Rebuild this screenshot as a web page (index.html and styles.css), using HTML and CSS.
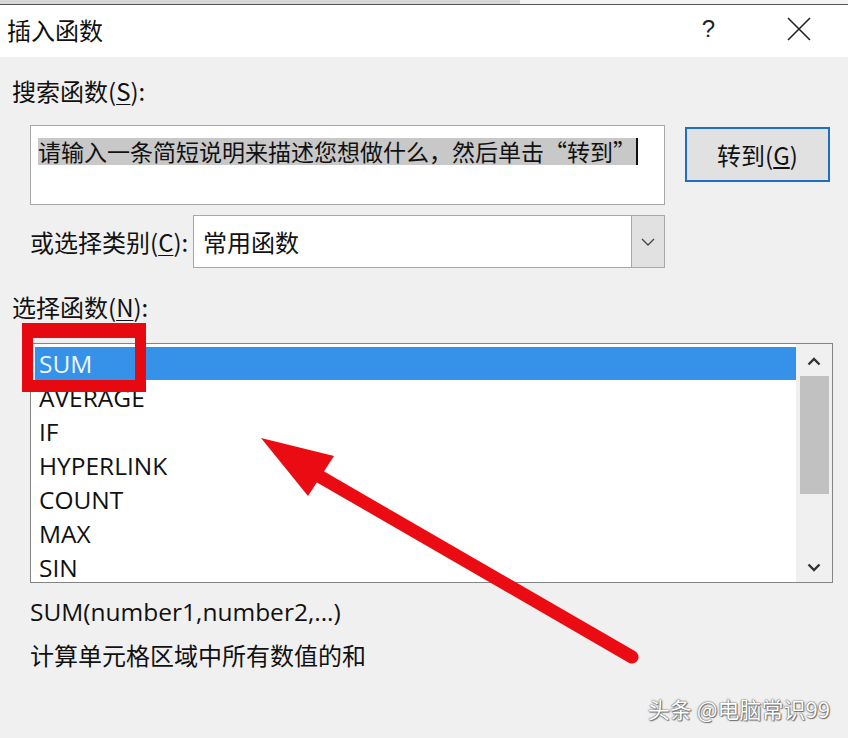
FILE: index.html
```html
<!DOCTYPE html>
<html lang="zh-CN">
<head>
<meta charset="utf-8">
<title>插入函数</title>
<link rel="stylesheet" href="styles.css">
</head>
<body>
<div class="dialog">
  <div class="topstrip"><div class="topstrip-left"></div></div>
  <div class="titlebar">
    <span class="title">插入函数</span>
    <span class="help">?</span>
    <svg class="close" width="24" height="24" viewBox="0 0 24 24"><path d="M1 1 L23 23 M23 1 L1 23" stroke="#222" stroke-width="1.6" fill="none"/></svg>
  </div>
  <div class="content">
    <div class="label lbl-search">搜索函数(<u>S</u>):</div>
    <div class="search-row">
      <div class="textbox"><span class="sel">请输入一条简短说明来描述您想做什么，然后单击“转到”</span><span class="caret"></span></div>
      <div class="btn">转到(<u>G</u>)</div>
    </div>
    <div class="cat-row">
      <span class="label">或选择类别(<u>C</u>):</span>
      <div class="select">
        <span class="select-val">常用函数</span>
        <span class="select-btn"><svg width="14" height="8" viewBox="0 0 14 8"><path d="M1 1 L7 7 L13 1" stroke="#444" stroke-width="1.3" fill="none"/></svg></span>
      </div>
    </div>
    <div class="label lbl-func">选择函数(<u>N</u>):</div>
    <div class="listbox">
      <ul class="items">
        <li class="item selected">SUM</li>
        <li class="item">AVERAGE</li>
        <li class="item">IF</li>
        <li class="item">HYPERLINK</li>
        <li class="item">COUNT</li>
        <li class="item">MAX</li>
        <li class="item">SIN</li>
      </ul>
      <div class="scroll">
        <svg class="sarrow" width="14" height="9" viewBox="0 0 14 9"><path d="M1.5 7.5 L7 2 L12.5 7.5" stroke="#333" stroke-width="2.4" fill="none"/></svg>
        <div class="thumb"></div>
        <div class="track"></div>
        <svg class="sarrow" width="14" height="9" viewBox="0 0 14 9"><path d="M1.5 1.5 L7 7 L12.5 1.5" stroke="#333" stroke-width="2.4" fill="none"/></svg>
      </div>
    </div>
    <div class="syntax">SUM(number1,number2,...)</div>
    <div class="desc">计算单元格区域中所有数值的和</div>
    <div class="watermark">头条 @电脑常识99</div>
  </div>
  <div class="redbox"></div>
  <svg class="arrow" width="848" height="738" viewBox="0 0 848 738">
    <line x1="305" y1="468" x2="632" y2="657" stroke="#ea0c12" stroke-width="13" stroke-linecap="round"/>
    <polygon points="261,438 334,456 308,496" fill="#ea0c12"/>
  </svg>
</div>
</body>
</html>
```

FILE: styles.css
```css
* { box-sizing: border-box; }
html, body { margin: 0; padding: 0; }
body {
  width: 848px;
  height: 738px;
  overflow: hidden;
  background: #f0f0f0;
  font-family: "Noto Sans CJK SC", "Noto Sans", sans-serif;
  font-size: 24px;
  color: #111;
}
.dialog {
  position: relative;
  width: 848px;
  height: 738px;
  display: flex;
  flex-direction: column;
}
.topstrip {
  height: 5px;
  background: #f4f4f4;
  border-bottom: 1px solid #555;
}
.topstrip-left {
  width: 520px;
  height: 4px;
  background: #d8d8d8;
}
.titlebar {
  height: 52px;
  background: #fff;
  display: flex;
  align-items: center;
  padding-left: 7px;
  padding-bottom: 4px;
}
.title { font-size: 24px; flex: 1; }
.help { font-family: "Liberation Sans", sans-serif; font-size: 24px; margin-right: 72px; color: #222; }
.close { margin-right: 37px; }
.content {
  flex: 1;
  display: flex;
  flex-direction: column;
  padding-top: 19px;
}
.label { line-height: 30px; white-space: nowrap; }
.label u { text-decoration-thickness: 1px; text-underline-offset: 3px; }
.lbl-search { margin-left: 12px; }
.search-row {
  display: flex;
  align-items: flex-start;
  margin-top: 19px;
  margin-left: 30px;
}
.textbox {
  width: 635px;
  height: 80px;
  background: #fff;
  border: 1px solid #a8a8a8;
  padding: 12px 0 0 7px;
  display: flex;
  align-items: flex-start;
  white-space: nowrap;
  overflow: hidden;
}
.sel {
  background: #c8c8c8;
  line-height: 27px;
  font-size: 23px;
}
.caret {
  width: 2px;
  height: 27px;
  background: #111;
}
.btn {
  margin-left: 20px;
  margin-top: 2px;
  width: 145px;
  height: 55px;
  background: #e1e1e1;
  border: 2px solid #1f6fc0;
  display: flex;
  align-items: center;
  justify-content: center;
}
.cat-row {
  display: flex;
  align-items: center;
  margin-top: 10px;
  margin-left: 30px;
}
.select {
  margin-left: auto;
  margin-right: 183px;
  width: 472px;
  height: 53px;
  background: #fff;
  border: 1px solid #a8a8a8;
  display: flex;
}
.select-val { flex: 1; padding-left: 9px; line-height: 51px; }
.select-btn {
  width: 33px;
  background: #e1e1e1;
  border-left: 1px solid #a8a8a8;
  display: flex;
  align-items: center;
  justify-content: center;
}
.lbl-func { margin-top: 24px; margin-left: 12px; }
.listbox {
  margin-top: 21px;
  margin-left: 30px;
  width: 803px;
  height: 240px;
  background: #fff;
  border: 1px solid #848484;
  display: flex;
  overflow: hidden;
}
.items {
  list-style: none;
  margin: 0;
  padding: 3px 0 0 4px;
  flex: 1;
}
.item {
  height: 34px;
  line-height: 34px;
  padding-left: 4px;
  font-family: "Open Sans", "Noto Sans", sans-serif;
  font-size: 24.5px;
  width: 761px;
}
.item.selected {
  background: #3592e8;
  color: #eef6ff;
  height: 33px;
  margin-bottom: 1px;
}
.scroll {
  width: 36px;
  background: #f0f0f0;
  display: flex;
  flex-direction: column;
  align-items: center;
  padding: 13px 3px 10px 3px;
}
.sarrow { flex: none; }
.thumb {
  margin-top: 10px;
  width: 29px;
  height: 118px;
  background: #c1c1c1;
}
.track { flex: 1; }
.syntax {
  margin-top: 14px;
  margin-left: 30px;
  line-height: 30px;
  font-family: "Open Sans", "Noto Sans", sans-serif;
  font-size: 24.5px;
}
.desc {
  margin-top: 13px;
  margin-left: 30px;
  line-height: 30px;
}
.watermark {
  margin-top: 23px;
  align-self: flex-end;
  margin-right: 18px;
  line-height: 30px;
  font-size: 22px;
  color: #fff;
  text-shadow: 0 0 1px #555, 0 0 2px #666, 1px 1px 1px #777;
}
.redbox {
  position: absolute;
  left: 22px;
  top: 323px;
  width: 124px;
  height: 69px;
  border-style: solid;
  border-color: #e60a10;
  border-width: 15px 11px 12px 11px;
}
.arrow {
  position: absolute;
  left: 0;
  top: 0;
  pointer-events: none;
}
```
